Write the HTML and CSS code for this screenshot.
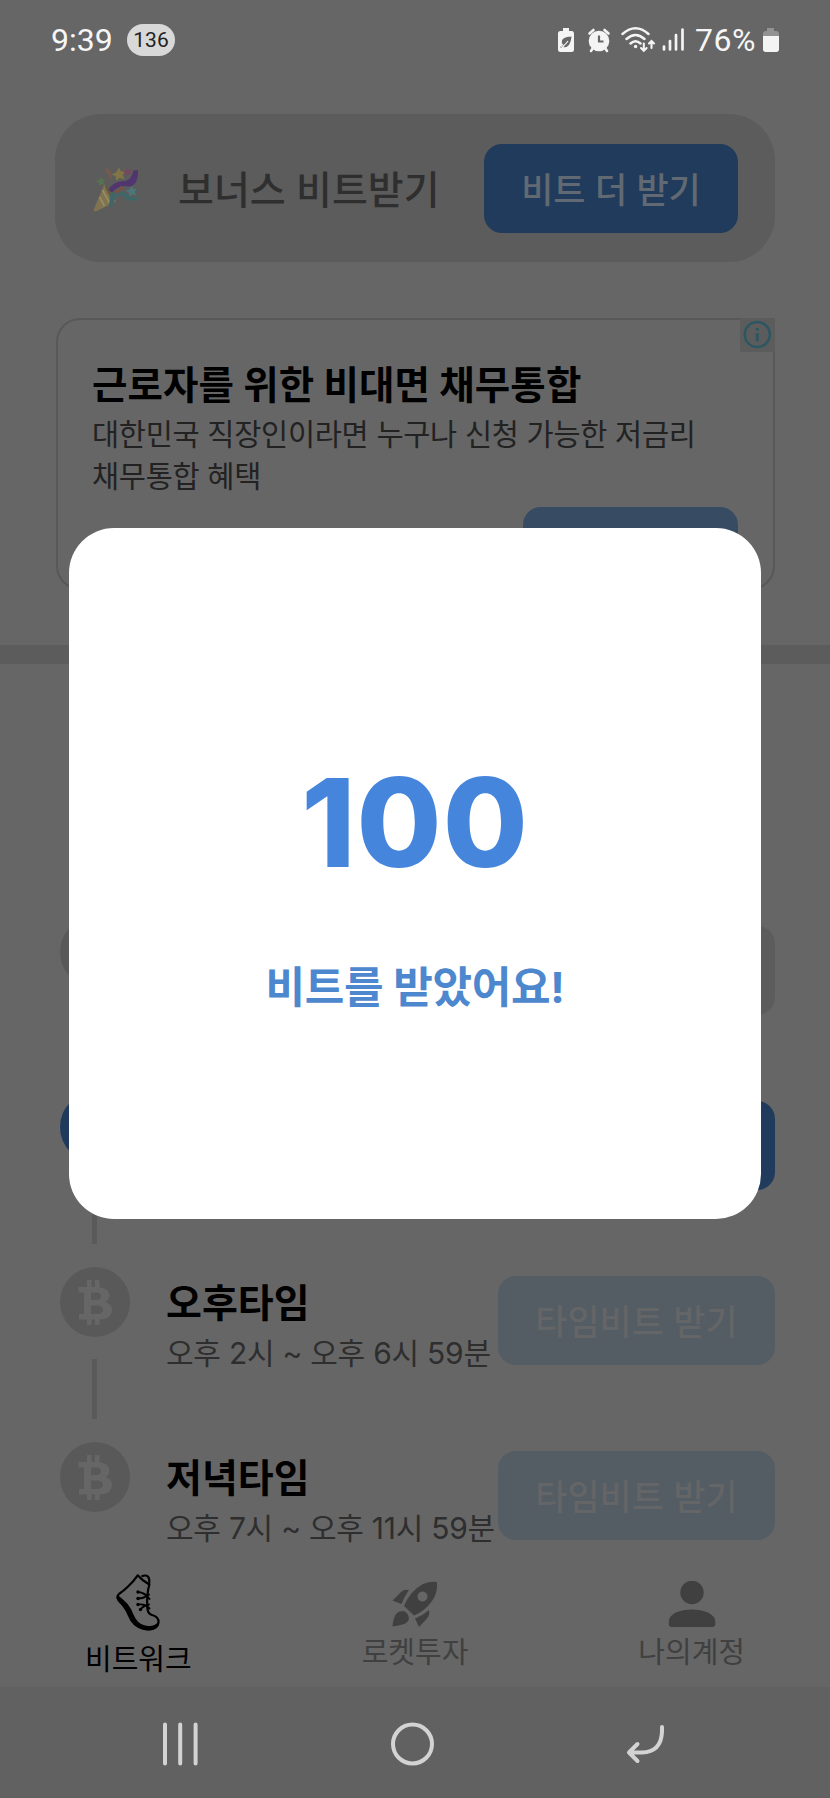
FILE: index.html
```html
<!DOCTYPE html>
<html lang="ko">
<head>
<meta charset="utf-8">
<title>비트워크</title>
<link rel="stylesheet" href="styles.css">
</head>
<body>
<div class="screen">
  <header class="status">
    <span class="clock">9:39</span>
    <span class="count">136</span>
    <svg class="status-icons" width="130" height="32" viewBox="0 0 130 32" fill="#f4f4f4">
      <path d="M8 4h6v3h2.500q2.500 0 2.500 2.500v16q0 2.500-2.500 2.500h-11Q3 28 3 25.500v-16Q3 7 5.500 7H8z"/>
      <path d="M16.500 12.500Q6 13 6.800 18.500q.2 1.500 1.400 2.300l-2.700 1.700q-.5 1.500 1 1l4-3.200-2 3q7 .5 8-10.800z" fill="#666"/>
      <path d="M6 22.500q3.500-.5 7-5.500" fill="none" stroke="#f4f4f4" stroke-width="1.200"/>
      <circle cx="44" cy="17" r="10.300"/>
      <path d="M34.500 9.500l4-3.500M53.500 9.500l-4-3.500M38 24l-2 3M50 24l2 3" stroke="#f4f4f4" stroke-width="2.600" stroke-linecap="round"/>
      <path d="M44 11.500V17.500h4.500" fill="none" stroke="#666" stroke-width="2.200"/>
      <g fill="none" stroke="#f4f4f4" stroke-width="2.500" stroke-linecap="round">
        <path d="M67.500 10q13-11.500 26 0M71.500 15q9-8 18 0M75.500 19.500q5-4.500 10 0"/>
        <path d="M88.800 19.500v7M86 24l2.800 2.800 2.800-2.800M96.500 24v-7M94 19.500l2.500-2.500 2.500 2.500" stroke-width="2.100"/>
        <path d="M109 22.500v3M115 17v8.500M121 11v14.500M127.500 5.500v20" stroke-width="2.700"/>
      </g>
      <circle cx="80.600" cy="22.500" r="1.700"/>
    </svg>
    <span class="percent">76%</span>
    <svg width="18" height="28" viewBox="0 0 18 28"><path d="M5 2h7v3h2q3 0 3 3v15q0 3-3 3H4q-3 0-3-3V8q0-3 3-3h1z" fill="#929292"/><path d="M1 10h16v13q0 3-3 3H4q-3 0-3-3z" fill="#f4f4f4"/></svg>
  </header>

  <section class="bonus">
    <svg class="party" width="48" height="48" viewBox="0 0 48 48">
      <path d="M11.300 20.500L.8 45.500q-.3 2.500 2 2l20.200-10q-1-9-11.700-17z" fill="#807450"/>
      <path d="M11.300 20.500q10 6 11.700 16-8-3-11.700-16z" fill="#655b41"/>
      <path d="M6.500 33l5 9M9.500 26l7 13" stroke="#968b65" stroke-width="1.800"/>
      <path d="M15.500 26q4-8 14-8.800 9 0 11-10.700l4.500-.5q.5 16-9.500 16.500-9-2.500-16.500 6z" fill="#51356f"/>
      <path d="M14 3.500q6 4 4.500 13l-2.500-3q0-4-4-6z" fill="#755b4f"/>
      <path d="M19 29q8-5 15 1.500 5 4.500 12 1.500l-2 4.500q-9 1.500-14-4-4-3-8 1 0 5-3.500 10l-3-3q2-3 1-9z" fill="#406768"/>
      <path d="M21 27q6-1 7-6l2 4-6 5z" fill="#7c5144"/>
      <path d="M26 3.500l1.800 4 4.700-.3-3 3.600 2 4.400-4.700-1.400-3.700 3-.3-4.600-4.300-2 4.500-1.700z" fill="#817545"/>
      <path d="M34.500 3.500l1 2.500 3-.3-1.800 2.300 1.300 2.700-3-.8-2.200 2-.3-2.900-2.600-1.300 2.800-1.200z" fill="#79455f"/>
      <path d="M8 12.500l1 3 3.200-.3-2 2.800 1.400 3-3-1-2.500 2.300-.2-3.500-3-1.600 3.200-1.300z" fill="#577250"/>
      <path d="M39 21.500l1 3.500 4-.5-2.500 3.300 1.700 3.700-3.800-1.300-3 2.800-.2-4.200-3.700-2 4-1.300z" fill="#4b777a"/>
    </svg>
    <span class="bonus-title">보너스 비트받기</span>
    <button class="btn">비트 더 받기</button>
  </section>

  <section class="ad">
    <h2 class="ad-title">근로자를 위한 비대면 채무통합</h2>
    <p class="ad-text">대한민국 직장인이라면 누구나 신청 가능한 저금리<br>채무통합 혜택</p>
    <div class="ad-action"></div>
    <svg class="ad-info" width="35" height="34" viewBox="0 0 35 34"><circle cx="17.300" cy="16.500" r="12.500" fill="none" stroke="#2c5762" stroke-width="2.600"/><path d="M15.800 10h3v2.500h-3zM15.800 15h3v8.500h-3z" fill="#2c5762"/></svg>
  </section>

  <div class="divider"></div>

  <section class="times">
    <div class="row">
      <div class="track"><span class="coin"></span><span class="line"></span></div>
      <div class="btn wide past"></div>
    </div>
    <div class="row">
      <div class="track"><span class="coin now"></span><span class="line"></span></div>
      <div class="btn wide"></div>
    </div>
    <div class="row">
      <div class="track">
        <span class="coin"><svg width="70" height="70" viewBox="0 0 70 70"><path class="bit" fill-rule="evenodd" d="M18.500 20H27v-7h4.500v7H35v-7h4.500v7.200C46 21 49.500 24 49.500 28.500c0 3-1.500 5.300-4.500 6.500 4.500 1.200 7 4 7 8 0 6-4.500 9.200-12.500 9.500v5.500H35v-5.500h-3.500V58H27v-5.500h-8V47h5V25.500h-5.500zM31 25.500V33h5c3 0 5-1.300 5-3.800 0-2.400-1.700-3.700-5-3.700zM31 38.500V47h5.500c4.200 0 6.500-1.400 6.500-4.200 0-2.800-2.300-4.300-6.500-4.300z"/></svg></span>
        <span class="line"></span>
      </div>
      <div class="info"><h3 class="name">오후타임</h3><p class="range">오후 2시 ~ 오후 6시 59분</p></div>
      <button class="btn wide off">타임비트 받기</button>
    </div>
    <div class="row last">
      <div class="track">
        <span class="coin"><svg width="70" height="70" viewBox="0 0 70 70"><path class="bit" fill-rule="evenodd" d="M18.500 20H27v-7h4.500v7H35v-7h4.500v7.200C46 21 49.500 24 49.500 28.500c0 3-1.500 5.300-4.500 6.500 4.500 1.200 7 4 7 8 0 6-4.500 9.200-12.500 9.500v5.500H35v-5.500h-3.500V58H27v-5.500h-8V47h5V25.500h-5.500zM31 25.500V33h5c3 0 5-1.300 5-3.800 0-2.400-1.700-3.700-5-3.700zM31 38.500V47h5.500c4.200 0 6.500-1.400 6.500-4.200 0-2.800-2.300-4.300-6.500-4.300z"/></svg></span>
      </div>
      <div class="info"><h3 class="name">저녁타임</h3><p class="range">오후 7시 ~ 오후 11시 59분</p></div>
      <button class="btn wide off">타임비트 받기</button>
    </div>
  </section>

  <nav class="tabs">
    <a class="tab active">
      <svg width="60" height="64" viewBox="0 0 60 64">
        <path d="M29.700 5.300Q34 10.500 41.300 14.500 38.500 25 39.300 37q0 6 4 7.800 8 2 7.200 8-1 6-9 6.500-10 0-15-7.500-3-4.500-5.500-11.500Q17 34 10.500 29.500q-2.500-3 1-6 4-2.500 8-6.500 6-5.500 10.200-11.700z" fill="none" stroke="#000" stroke-width="2.200" stroke-linejoin="round"/>
        <path d="M9.500 25q-2 3.500 1 7 6 5.500 9.500 14 4 10.500 14 13.500 8 2 13-.5 4.500-3 4-8-3.500 5.500-11 5-8-.5-12.500-7.500-2-3.500-4.500-9.500-3-5.500-8.500-10-3-2.500-5-4z"/>
        <path d="M33.500 6.500q4-2 6.500 0 2 2.500 1 8" fill="none" stroke="#000" stroke-width="2.200"/>
        <path d="M30 22q7 .500 11.500 7M30 28.500q6 0 11-4M30 34.500q7-1 11.500 4M32.500 39.500Q36 35 41 34.500" fill="none" stroke="#000" stroke-width="1.900" stroke-linecap="round"/>
        <circle cx="30" cy="22" r="1.700"/><circle cx="30" cy="28.500" r="1.700"/><circle cx="30" cy="34.500" r="1.700"/><circle cx="32.500" cy="39.500" r="1.700"/>
      </svg>
      <span>비트워크</span>
    </a>
    <a class="tab">
      <svg width="46" height="46" viewBox="0 0 46 46" fill="#404040">
        <path fill-rule="evenodd" d="M12 25Q18 10 31 3q7-3 14-2 1 11-5 19-7 10-18 14.500zM30.500 10.500a5 5 0 1 0 .01 0z"/>
        <path d="M.5 19.500L9 11q3-3 8-2-4.500 6-7.500 14zM23 37.500q8-3 14-8.500 1 6-2.500 9L27 46zM.5 45.500Q1 38 4 33q4-4.500 9-2.500 5 4 3.500 9Q14 44 .5 45.500z"/>
      </svg>
      <span>로켓투자</span>
    </a>
    <a class="tab">
      <svg width="48" height="46" viewBox="0 0 48 46" fill="#404040"><circle cx="24" cy="11.500" r="11.700"/><path d="M.8 41q0-6 7-9.500 7-3 16-3t16 3q7.500 3.500 7.500 9.500v2q0 3-3 3H3.500q-2.700 0-2.700-3z"/></svg>
      <span>나의계정</span>
    </a>
  </nav>

  <footer class="sysnav">
    <svg width="36" height="44" viewBox="0 0 36 44"><path d="M3 2.500v39M18.200 2.500v39M33.600 2.500v39" stroke="#d3d3d3" stroke-width="4" stroke-linecap="round"/></svg>
    <svg width="44" height="44" viewBox="0 0 44 44"><circle cx="22.500" cy="22" r="19.500" fill="none" stroke="#d3d3d3" stroke-width="4"/></svg>
    <svg width="40" height="40" viewBox="0 0 40 40" fill="none" stroke="#d3d3d3" stroke-width="4" stroke-linecap="round" stroke-linejoin="round"><path d="M37 3v5q-1 20-20 20.500H4M12.500 20L4 28.500l8.500 8.500"/></svg>
  </footer>

  <div class="modal">
    <strong class="amount">100</strong>
    <span class="message">비트를 받았어요!</span>
  </div>
</div>
</body>
</html>
```
FILE: styles.css
```css
* { box-sizing: border-box; margin: 0; padding: 0; }
body { background: #666; font-family: Inter, "Noto Sans CJK KR", sans-serif; }
svg { display: block; flex: none; }
.screen {
  position: relative;
  display: flex;
  flex-direction: column;
  width: 830px;
  height: 1798px;
  overflow: hidden;
  background: #666;
  white-space: nowrap;
}

.status {
  display: flex;
  align-items: center;
  height: 80px;
  flex: none;
  padding: 0 50px 0 51px;
  font-family: Roboto, sans-serif;
  font-size: 32px;
  color: #f6f6f6;
}
.clock { width: 76px; }
.count {
  width: 48px;
  height: 32px;
  border-radius: 16px;
  background: #d8d8d8;
  color: #222;
  font-size: 21px;
  line-height: 32px;
  text-align: center;
}
.status-icons { margin-left: auto; margin-right: 10px; }
.percent { width: 67px; letter-spacing: .5px; }

.bonus {
  display: flex;
  align-items: center;
  flex: none;
  height: 148px;
  margin: 34px 55px 0;
  padding: 0 37px 0 38px;
  border-radius: 46px;
  background: #5c5c5c;
}
.bonus-title {
  margin-left: 37px;
  padding-top: 3px;
  font-size: 39px;
  line-height: 56px;
  font-weight: 500;
  color: #2f2f2f;
}
.btn {
  flex: none;
  width: 254px;
  height: 89px;
  margin-left: auto;
  padding-top: 3px;
  border: 0;
  border-radius: 18px;
  background: #203b5b;
  color: #616972;
  font: 500 35px/86px Inter, "Noto Sans CJK KR", sans-serif;
  text-align: center;
}
.btn.wide { width: 277px; }
.btn.off { background: #545c64; color: #636566; }
.btn.past { background: #5c5c5c; }

.ad {
  position: relative;
  flex: none;
  height: 272px;
  margin: 56px 55px 0 56px;
  padding: 37px 35px 0 34px;
  border: 2px solid #585858;
  border-radius: 24px;
}
.ad-title { font-size: 38.500px; line-height: 56px; font-weight: 700; letter-spacing: .1px; color: #000; }
.ad-text { font-size: 29.500px; line-height: 42px; letter-spacing: -.3px; color: #222; }
.ad-action {
  width: 215px;
  height: 70px;
  margin: 10px 0 0 auto;
  border-radius: 18px;
  background: #374c63;
}
.ad-info { position: absolute; top: -2px; right: -2px; background: #5c5c5c; }

.divider { flex: none; height: 19px; margin-top: 55px; background: #5c5c5c; }

.times { flex: none; height: 883px; padding: 253px 55px 0 60px; }
.row { display: flex; height: 175px; }
.row.last { height: 105px; }
.row .btn { margin-top: 9px; }
.track { display: flex; flex-direction: column; align-items: center; width: 70px; }
.coin { width: 70px; height: 70px; border-radius: 50%; background: #595959; }
.coin.now { background: #203a5e; }
.bit { fill: #666; }
.line { width: 5px; height: 60px; margin: 22px 1px 0 0; background: #5a5a5a; }
.info { width: 0; margin-left: 36px; }
.name { font-size: 39px; line-height: 56px; font-weight: 700; margin-top: 8px; color: #000; }
.range { font-size: 30px; line-height: 44px; letter-spacing: -.25px; color: #2e2e2e; }

.tabs { display: flex; flex: none; height: 140px; }
.tab {
  display: flex;
  flex-direction: column;
  align-items: center;
  flex: 1;
  padding-top: 34px;
  font-size: 29px;
  line-height: 42px;
  color: #404040;
}
.tab.active { padding-top: 23px; color: #000; }
.tab span { margin-top: 5px; }

.sysnav {
  display: flex;
  align-items: center;
  justify-content: space-between;
  flex: none;
  height: 111px;
  padding: 3px 165px 0 162px;
  background: #616161;
}

.modal {
  position: absolute;
  left: 69px;
  top: 528px;
  display: flex;
  flex-direction: column;
  align-items: center;
  width: 692px;
  height: 691px;
  padding-top: 222px;
  border-radius: 45px;
  background: #fff;
}
.amount { font-size: 123px; line-height: 145px; font-weight: 800; letter-spacing: 1px; color: #4586dc; }
.message { margin-top: 60px; font-size: 43px; line-height: 64px; font-weight: 700; letter-spacing: -.3px; color: #4d87ce; }
```
